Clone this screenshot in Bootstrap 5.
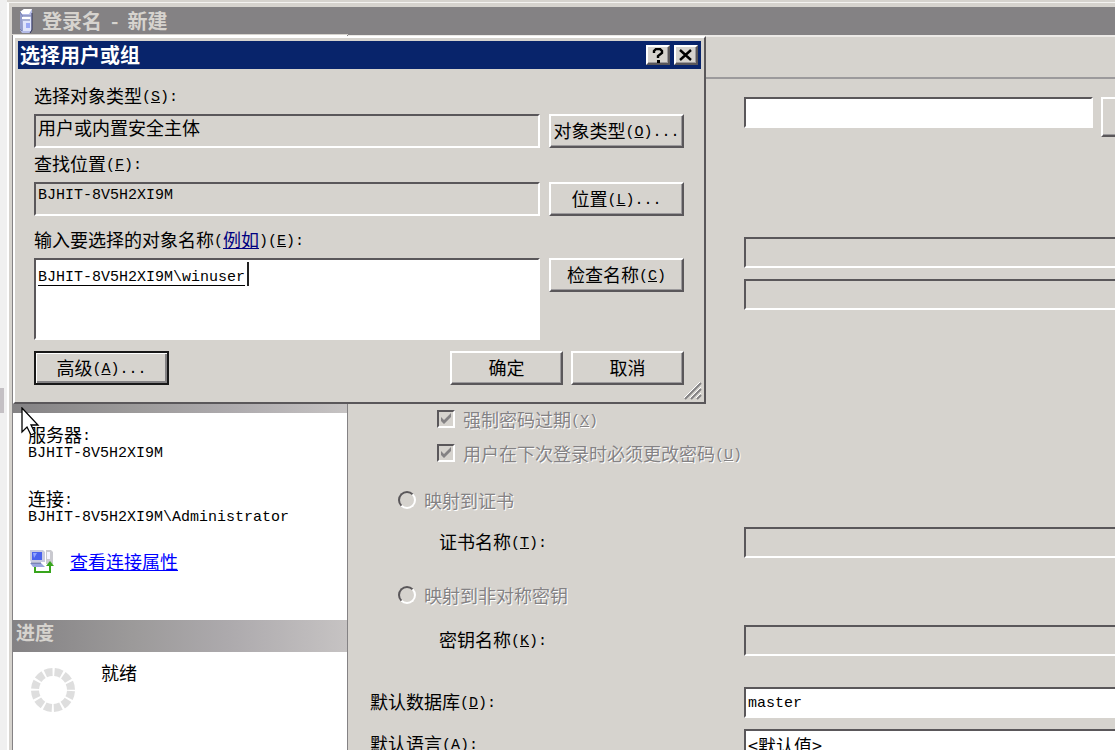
<!DOCTYPE html>
<html lang="zh-CN">
<head>
<meta charset="utf-8">
<meta name="viewport" content="width=device-width, initial-scale=1">
<title>登录名 - 新建</title>
<link href="https://cdn.jsdelivr.net/npm/bootstrap@5.3.0/dist/css/bootstrap.min.css" rel="stylesheet">
<style>
:root { --face:#d6d3ce; --dark:#5a575a; --shade:#848284; }
body { background:var(--face); color:#000; font:18px/24px "Liberation Sans","Noto Sans CJK SC",sans-serif; }
label, .txt { font-family:"Noto Sans CJK SC",sans-serif; line-height:24px; }
.en { font:15px/18px "Liberation Mono",monospace; }
span.en { vertical-align:2px; line-height:1; }
.strip { width:7px; background:#f0f0f0; }
.thumb { width:4px; height:25px; top:388px; background:#c4c0c4; }
.win { border-left:2px solid #fff; padding:4px 0 0 3px; border-top:1px solid #f4f3f1; margin-top:2px; min-width:0; }
.caption { height:27px; background:var(--shade); color:var(--face); font:700 20px/27px "Noto Sans CJK SC",sans-serif; }
.side { width:336px; background:#fff; border-left:1px solid var(--shade); border-right:1px solid var(--shade); margin-top:1px; }
.pages { height:346px; }
.band { height:32px; background:linear-gradient(90deg,#848284,#9c9a9a 36%,#adaaad 65%,#c6c3c3); color:var(--face); font:700 19px/24px "Noto Sans CJK SC",sans-serif; padding-left:3px; }
.info { height:207px; padding:12px 15px 0; }
.info .txt { line-height:18px; }
.info div.en { line-height:20px; }
.second { margin-top:25px; }
.linkrow { margin-top:20px; }
.pane { min-width:0; }
.toolzone { height:45px; border-top:1px solid var(--shade); border-bottom:2px solid #9c9a9c; box-shadow:inset 0 2px #eceae7; }
.lab { width:396px; flex:none; padding-bottom:3px; }
.lab.in1 { padding-left:22px; }
.lab.in2 { padding-left:91px; }
.sunk { border:2px solid; border-color:var(--dark) #fff #fff var(--dark); background:var(--face); border-radius:0; padding:0 2px; color:#000; outline:0; appearance:none; min-width:0; box-shadow:none; }
.white { background:#fff; }
.h31 { height:31px; }
.cut { margin-right:-20px; }
select.en { padding-top:3px; }
.raised { border:2px solid; border-color:#fff var(--dark) var(--dark) #fff; background:var(--face); border-radius:0; color:#000; padding:0 0 3px; font:18px/24px "Noto Sans CJK SC",sans-serif; box-shadow:inset -1px -1px #9c9a9c; }
.prime { border:2px solid #181818; box-shadow:inset 1px 1px #fff, inset -2px -2px #848284; }
.more { width:40px; height:40px; margin-right:-26px; }
.row34 { height:34px; padding-left:89px; }
.row32 { height:32px; padding-left:50px; }
.off { color:#848284; text-shadow:1px 1px #fff; }
.tick, .dot { appearance:none; margin:0; flex:none; width:18px; height:18px; }
.tick { border:2px solid; border-color:var(--dark) #fff #fff var(--dark); background:url("data:image/svg+xml,%3Csvg xmlns='http://www.w3.org/2000/svg' viewBox='0 0 14 14'%3E%3Cpath d='M2 5v4l3 3 7-7V1L5 8z' fill='%23848284'/%3E%3C/svg%3E"); }
.dot { border:2px solid; border-color:var(--dark) #fff #fff var(--dark); border-radius:50%; }
.gap-a { margin-top:18px; } .gap-b { margin-top:100px; } .gap-c { margin-top:11px; } .gap-d { margin-top:92px; } .gap-e { margin-top:14px; } .gap-f { margin-top:21px; } .gap-g { margin-top:31px; }
.dlg { position:absolute; left:13px; top:36px; width:693px; max-width:100%; background:var(--face); padding:3px; border:2px solid; border-color:#fff var(--dark) var(--dark) #fff; z-index:2; }
.dlgcap { height:28px; background:#08246b; color:#fff; font:700 20px/26px "Noto Sans CJK SC",sans-serif; padding:0 3px 0 2px; }
.tiny { width:24px; height:20px; display:grid; place-items:center; padding:0; }
.dlgbody { padding:14px 17px 14px 16px; }
.cap { height:24px; margin-bottom:7px; }
.cap label { display:inline-block; }
.near { margin-top:3px; }
.far { margin-top:11px; }
.pair { display:grid; grid-template-columns:minmax(0,1fr) 135px; column-gap:9px; }
.pair .raised, .acts .raised { height:34px; }
.dlgtext { height:34px; width:100%; }
.cjkin { font:18px/24px "Noto Sans CJK SC",sans-serif; padding-bottom:8px; }
.enin { padding-bottom:8px; }
textarea.sunk { width:100%; height:82px; resize:none; padding:9px 2px; text-decoration:underline; text-underline-offset:4px; display:block; }
.caret { position:absolute; left:213px; top:4px; width:2px; height:24px; background:#222; }
.grip { position:absolute; right:2px; bottom:2px; }
.pointer { position:absolute; left:21px; top:407px; z-index:3; }
.b113 { width:113px; }
.b135 { width:135px; }
a.see { color:#00f; }
a.eg { color:#000080; }
</style>
</head>
<body class="vh-100 overflow-hidden m-0">
<div class="d-flex h-100 position-relative">
  <div class="strip flex-shrink-0"><div class="thumb position-absolute start-0"></div></div>
  <div class="win d-flex flex-column flex-grow-1 overflow-hidden">
    <header class="caption d-flex align-items-center flex-shrink-0">
      <svg class="ms-2 me-2" width="14" height="24" viewBox="0 0 14 24" aria-hidden="true">
        <path d="M0 3 4 0h8v20l-2 4H2l-2-3z" fill="#b5bce8"/><path d="M0 3 4 0h8L9 5H2z" fill="#fff"/><path d="M2 7h9v15H3z" fill="#dfe4fb"/><path d="M0 3v17l2 2V6zM2 7h9M3 11h7" stroke="#737cad" fill="none"/><path d="M2 8h8v2H2z" fill="#fff"/><path d="M6 14h4v5H6z" fill="#9aa9f5"/><path d="M12 4v17l-2 3" stroke="#30345a" fill="none"/>
      </svg>
      <span>登录名&nbsp;&nbsp;-&nbsp;&nbsp;新建</span>
    </header>
    <div class="d-flex flex-grow-1">
      <aside class="side flex-shrink-0">
        <div class="pages"></div>
        <div class="band"></div>
        <section class="info">
          <div class="txt">服务器<span class="en">:</span></div>
          <div class="en">BJHIT-8V5H2XI9M</div>
          <div class="txt second">连接<span class="en">:</span></div>
          <div class="en">BJHIT-8V5H2XI9M\Administrator</div>
          <div class="linkrow d-flex align-items-center">
            <svg width="26" height="26" viewBox="0 0 26 26" class="me-3" aria-hidden="true">
              <path d="M2 2h13l2 2v10H3l-1-2z" fill="#c8cbe0"/><path d="M4 4h10v8H4z" fill="#4a62ee"/><path d="M5 5h4l-3 5z" fill="#91a4ff"/><path d="M2 15h11l4 4H5z" fill="#9aa6de"/><path d="M3 15h10" stroke="#596394"/><path d="M18 2h5l2 2v12h-7z" fill="#c9c9cf"/><path d="M19 4h3v7h-3z" fill="#f4f4ff"/><path d="M7 19v5h15v-8" fill="none" stroke="#38a51d" stroke-width="2"/><path d="m18 18 4-5 4 5z" fill="#38a51d"/>
            </svg>
            <a href="#" class="see txt">查看连接属性</a>
          </div>
        </section>
        <div class="band">进度</div>
        <div class="d-flex ps-3 pt-2">
          <svg width="48" height="60" viewBox="0 0 48 60" aria-hidden="true"><circle cx="24" cy="30" r="18" fill="none" stroke="#dedede" stroke-width="8" stroke-dasharray="7.4 2.025" stroke-dashoffset="-1"/></svg>
          <div class="txt ps-4">就绪</div>
        </div>
      </aside>
      <main class="pane flex-grow-1 overflow-hidden">
        <div class="toolzone"></div>
        <div class="gap-a d-flex align-items-start">
          <div class="lab"></div>
          <input class="sunk white h31 flex-grow-1" type="text" aria-label="登录名">
          <button class="raised more ms-2" type="button" aria-label="搜索"></button>
        </div>
        <div class="gap-b d-flex"><div class="lab"></div><input class="sunk h31 flex-grow-1 cut" type="password" aria-label="密码" disabled></div>
        <div class="gap-c d-flex"><div class="lab"></div><input class="sunk h31 flex-grow-1 cut" type="password" aria-label="确认密码" disabled></div>
        <div class="gap-d row34 d-flex align-items-center gap-2"><input class="tick" type="checkbox" id="exp" checked disabled><label for="exp" class="off">强制密码过期<span class="en">(<u>X</u>)</span></label></div>
        <div class="row34 d-flex align-items-center gap-2"><input class="tick" type="checkbox" id="chg" checked disabled><label for="chg" class="off">用户在下次登录时必须更改密码<span class="en">(<u>U</u>)</span></label></div>
        <div class="gap-e row32 d-flex align-items-center gap-2"><input class="dot" type="radio" name="map" id="cert" disabled><label for="cert" class="off">映射到证书</label></div>
        <div class="gap-c d-flex align-items-center"><label class="lab in2" for="certname">证书名称<span class="en">(<u>T</u>):</span></label><input id="certname" class="sunk h31 flex-grow-1 cut" type="text" disabled></div>
        <div class="gap-f row32 d-flex align-items-center gap-2"><input class="dot" type="radio" name="map" id="key" disabled><label for="key" class="off">映射到非对称密钥</label></div>
        <div class="gap-e d-flex align-items-center"><label class="lab in2" for="keyname">密钥名称<span class="en">(<u>K</u>):</span></label><input id="keyname" class="sunk h31 flex-grow-1 cut" type="text" disabled></div>
        <div class="gap-g d-flex align-items-center"><label class="lab in1" for="db">默认数据库<span class="en">(<u>D</u>):</span></label><select id="db" class="sunk white h31 flex-grow-1 cut en"><option>master</option></select></div>
        <div class="gap-c d-flex align-items-center"><label class="lab in1" for="lang">默认语言<span class="en">(<u>A</u>):</span></label><select id="lang" class="sunk white h31 flex-grow-1 cut txt"><option>&lt;默认值&gt;</option></select></div>
      </main>
    </div>
  </div>

  <section class="dlg" role="dialog" aria-labelledby="dlgname">
    <div class="dlgcap d-flex align-items-center">
      <span id="dlgname" class="me-auto">选择用户或组</span>
      <button class="raised tiny me-1" type="button" aria-label="帮助"><svg width="12" height="15" viewBox="0 0 12 15"><path d="M2 5V3l2-2h4l2 2v2L6 8v2" fill="none" stroke="#000" stroke-width="2.4"/><path d="M5 12h3v3H5z"/></svg></button>
      <button class="raised tiny" type="button" aria-label="关闭"><svg width="14" height="12" viewBox="0 0 14 12"><path d="m1 1 11 10M12 1 1 11" stroke="#000" stroke-width="2.4"/></svg></button>
    </div>
    <div class="dlgbody">
      <div class="cap"><label for="otype">选择对象类型<span class="en">(<u>S</u>):</span></label></div>
      <div class="pair">
        <input id="otype" class="sunk dlgtext cjkin" value="用户或内置安全主体" readonly>
        <button class="raised" type="button">对象类型<span class="en">(<u>O</u>)...</span></button>
      </div>
      <div class="cap near"><label for="loc">查找位置<span class="en">(<u>F</u>):</span></label></div>
      <div class="pair">
        <input id="loc" class="sunk dlgtext enin en" value="BJHIT-8V5H2XI9M" readonly>
        <button class="raised" type="button">位置<span class="en">(<u>L</u>)...</span></button>
      </div>
      <div class="cap far"><label for="names">输入要选择的对象名称</label><span class="en">(</span><a href="#" class="eg txt">例如</a><span class="en">)(<u>E</u>):</span></div>
      <div class="pair position-relative">
        <textarea id="names" class="sunk white en" spellcheck="false">BJHIT-8V5H2XI9M\winuser</textarea>
        <button class="raised" type="button">检查名称<span class="en">(<u>C</u>)</span></button>
        <span class="caret"></span>
      </div>
      <div class="acts far d-flex gap-2">
        <button class="raised prime b135 me-auto" type="button">高级<span class="en">(<u>A</u>)...</span></button>
        <button class="raised b113" type="button">确定</button>
        <button class="raised b113" type="button">取消</button>
      </div>
    </div>
    <svg class="grip" width="18" height="18" viewBox="0 0 18 18" aria-hidden="true"><path d="M1 17 17 1M7 17 17 7M13 17l4-4" stroke="#848284" stroke-width="2"/><path d="M0 16 16 0M6 16 17 5M12 16l5-5" stroke="#fff"/></svg>
  </section>
  <svg class="pointer" width="20" height="28" viewBox="0 0 20 28" aria-hidden="true"><path d="M1 1v24l5-5 4 8 4-2-4-8h7z" fill="#fff" stroke="#000" stroke-width="1.3"/></svg>
</div>
<script src="https://cdn.jsdelivr.net/npm/bootstrap@5.3.0/dist/js/bootstrap.bundle.min.js"></script>
</body>
</html>
